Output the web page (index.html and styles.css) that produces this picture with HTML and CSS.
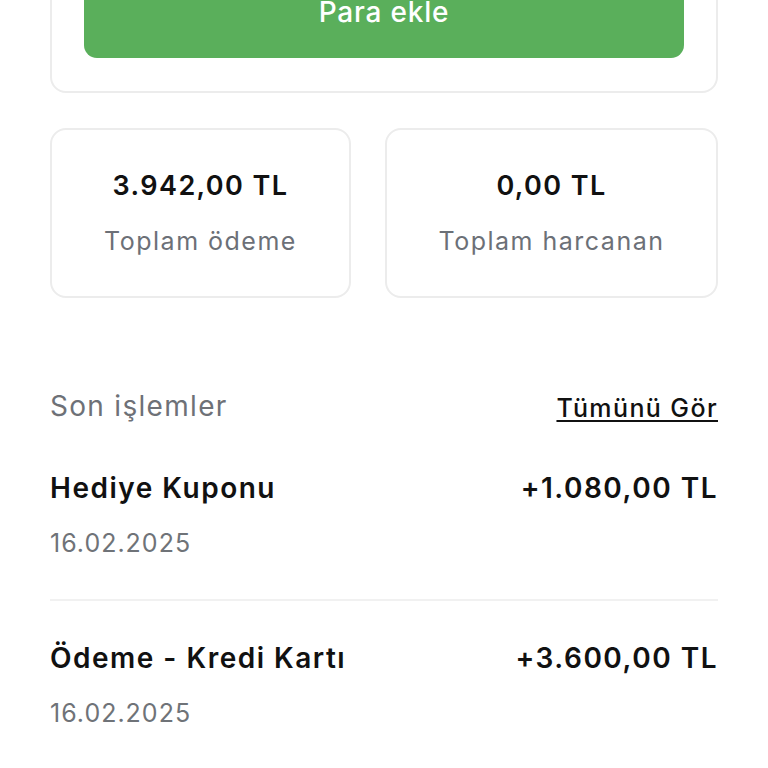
FILE: index.html
```html
<!DOCTYPE html>
<html lang="tr">
<head>
<meta charset="utf-8">
<link rel="stylesheet" href="styles.css">
</head>
<body>
<div class="page">
  <div class="card top-card">
    <button class="add-btn">Para ekle</button>
  </div>
  <div class="stats">
    <div class="card stat">
      <div class="stat-value">3.942,00 TL</div>
      <div class="stat-label">Toplam ödeme</div>
    </div>
    <div class="card stat">
      <div class="stat-value">0,00 TL</div>
      <div class="stat-label">Toplam harcanan</div>
    </div>
  </div>
  <div class="section-head">
    <div class="section-title">Son işlemler</div>
    <a class="see-all">Tümünü Gör</a>
  </div>
  <div class="tx-list">
    <div class="tx">
      <div class="tx-row">
        <div class="tx-title">Hediye Kuponu</div>
        <div class="tx-amount">+1.080,00 TL</div>
      </div>
      <div class="tx-date">16.02.2025</div>
    </div>
    <div class="tx">
      <div class="tx-row">
        <div class="tx-title">Ödeme - Kredi Kartı</div>
        <div class="tx-amount">+3.600,00 TL</div>
      </div>
      <div class="tx-date">16.02.2025</div>
    </div>
  </div>
</div>
</body>
</html>
```
FILE: styles.css
```css
* { box-sizing: border-box; }
html, body { margin: 0; padding: 0; background: #fff; }
body {
  font-family: Inter, "Noto Sans", "Liberation Sans", sans-serif;
  color: #111;
  overflow: hidden;
  height: 768px;
}
.page {
  padding: 0 50px;
  margin-top: -74px;
}
.card {
  border: 2px solid #ececec;
  border-radius: 16px;
  background: #fff;
}
.top-card {
  padding: 34px 32px 33px;
}
.add-btn {
  display: block;
  width: 100%;
  height: 96px;
  border: 0;
  border-radius: 13px;
  background: #5aaf5b;
  color: #fff;
  font-family: inherit;
  font-size: 28px;
  font-weight: 500;
  letter-spacing: 0.8px;
  padding: 4px 0 0;
}
.stats {
  display: grid;
  grid-template-columns: 301px 1fr;
  gap: 34px;
  margin-top: 35px;
}
.stat {
  height: 170px;
  display: flex;
  flex-direction: column;
  align-items: center;
  justify-content: center;
  gap: 24px;
}
.stat-value {
  font-size: 27px;
  line-height: 32px;
  font-weight: 600;
  letter-spacing: 1.4px;
  color: #111;
}
.stat-label {
  font-size: 25px;
  line-height: 30px;
  letter-spacing: 1.5px;
  color: #6c7077;
}
.section-head {
  display: flex;
  justify-content: space-between;
  align-items: center;
  margin-top: 91px;
  height: 34px;
}
.section-title {
  font-size: 28px;
  line-height: 34px;
  letter-spacing: 1.3px;
  color: #6e7177;
}
.see-all {
  font-size: 25px;
  line-height: 30px;
  font-weight: 500;
  letter-spacing: 1.4px;
  color: #111;
  text-decoration: underline;
  text-decoration-thickness: 2px;
  text-underline-offset: 3px;
  margin-top: 4px;
}
.tx-list {
  margin-top: 48px;
}
.tx {
  padding-bottom: 41px;
  border-bottom: 2px solid #f1f1f1;
}
.tx + .tx {
  padding-top: 40px;
}
.tx-row {
  display: flex;
  justify-content: space-between;
  align-items: center;
}
.tx-title, .tx-amount {
  font-size: 28px;
  line-height: 34px;
  font-weight: 600;
  letter-spacing: 1.5px;
  color: #111;
}
.tx-date {
  margin-top: 23px;
  font-size: 25px;
  line-height: 30px;
  letter-spacing: 1px;
  color: #6f7378;
}
```
